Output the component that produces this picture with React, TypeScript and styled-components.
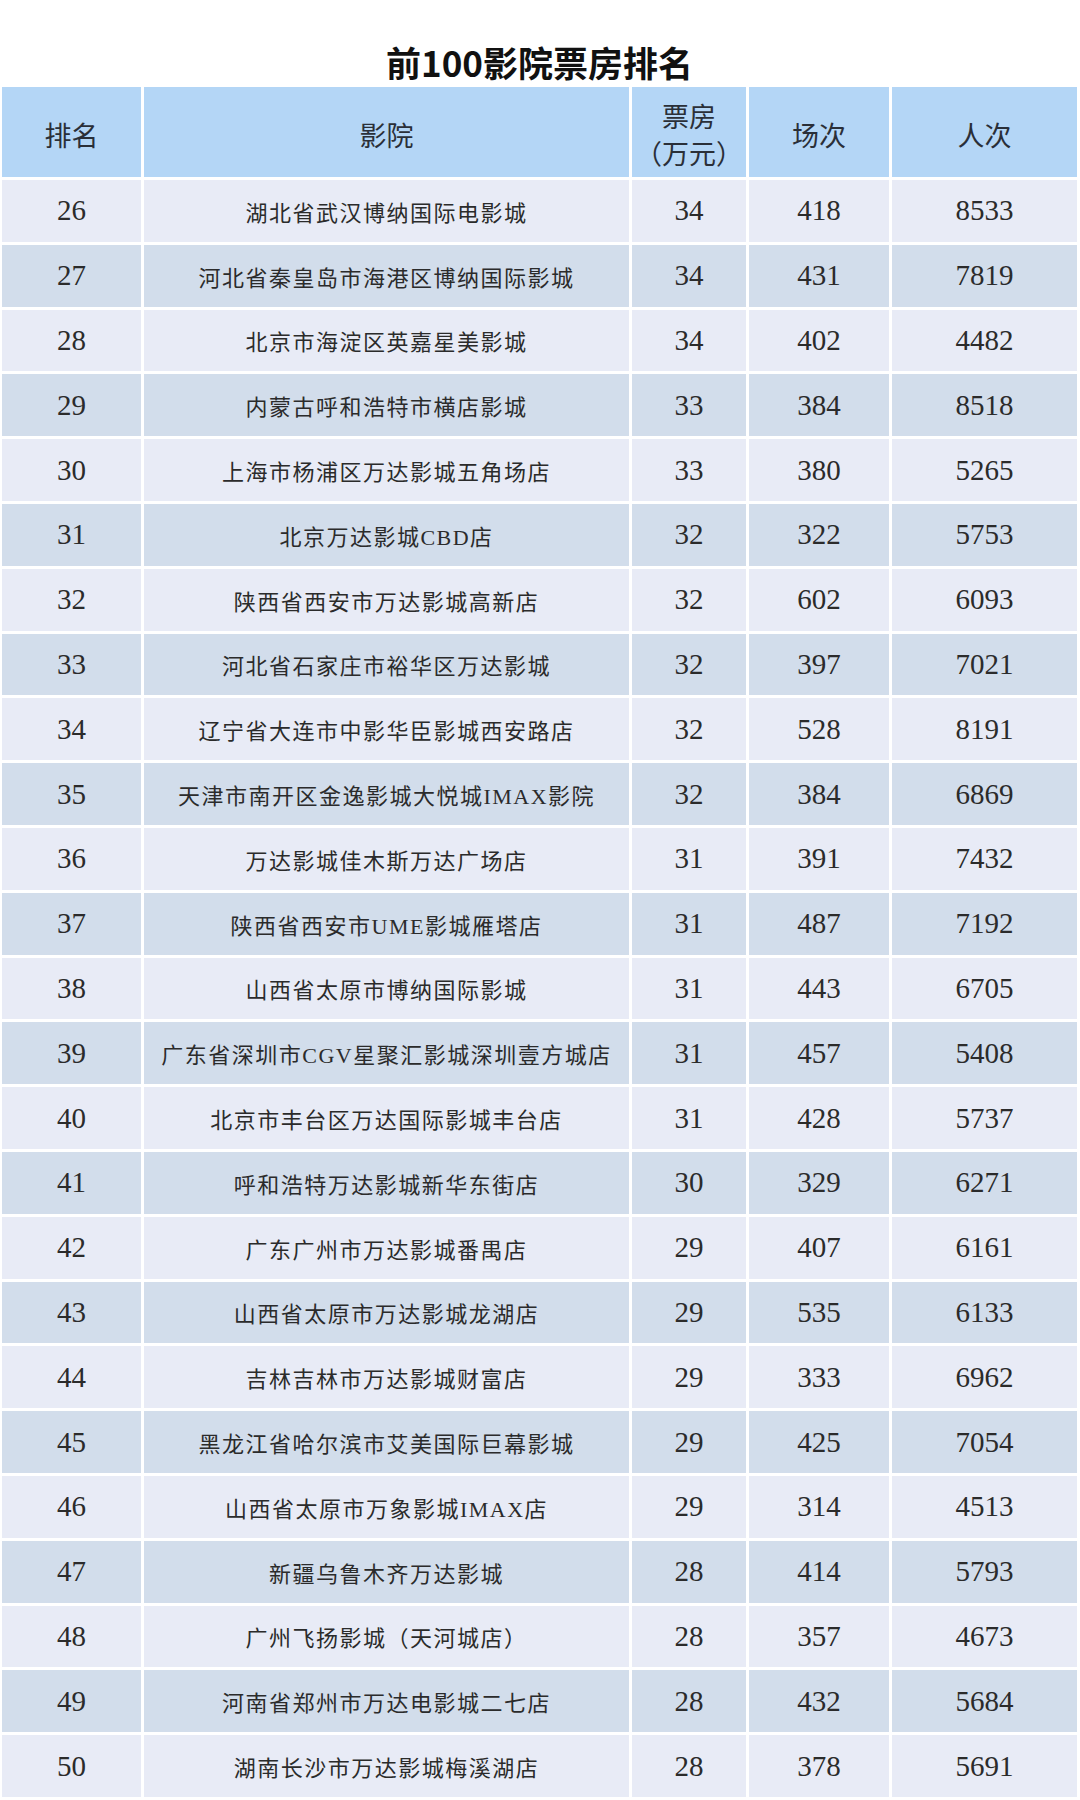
import React from 'react';
import styled, { createGlobalStyle } from 'styled-components';

const GlobalStyle = createGlobalStyle`
  html, body {
    margin: 0;
    padding: 0;
    background: #ffffff;
  }
`;

const Page = styled.div`
  width: 1080px;
  padding: 0 3px 0 2px;
  box-sizing: border-box;
  background: #ffffff;
`;

const Title = styled.h1`
  margin: 0;
  height: 84px;
  padding-top: 41px;
  box-sizing: border-box;
  text-align: center;
  font-family: "Noto Sans CJK SC", "Noto Sans", sans-serif;
  font-weight: 700;
  font-size: 35px;
  line-height: 42px;
  color: #111111;
`;

const Grid = styled.div`
  display: grid;
  grid-template-columns: 139px 485px 114px 140px 185px;
  column-gap: 3px;
  row-gap: 3px;
  padding-top: 3px;
`;

const HeadCell = styled.div`
  height: 90px;
  background: #b4d6f6;
  display: flex;
  flex-direction: column;
  align-items: center;
  justify-content: center;
  font-family: "Noto Sans CJK SC", sans-serif;
  font-weight: 400;
  font-size: 27px;
  line-height: 37px;
  color: #2a2f38;
  padding-top: 4px;
  box-sizing: border-box;
`;

const HeadLine = styled.span`
  display: block;
  height: 37px;
`;

const Cell = styled.div<{ $dark: boolean; $name?: boolean }>`
  height: 61.8px;
  background: ${(p) => (p.$dark ? '#d2ddeb' : '#e8ebf6')};
  display: flex;
  align-items: center;
  justify-content: center;
  font-family: "Liberation Serif", "Noto Sans CJK SC", serif;
  font-size: ${(p) => (p.$name ? '22px' : '29px')};
  letter-spacing: ${(p) => (p.$name ? '1.5px' : '0')};
  color: #2b2b2b;
  white-space: nowrap;
`;

const rows: [number, string, number, number, number][] = [
  [26, '湖北省武汉博纳国际电影城', 34, 418, 8533],
  [27, '河北省秦皇岛市海港区博纳国际影城', 34, 431, 7819],
  [28, '北京市海淀区英嘉星美影城', 34, 402, 4482],
  [29, '内蒙古呼和浩特市横店影城', 33, 384, 8518],
  [30, '上海市杨浦区万达影城五角场店', 33, 380, 5265],
  [31, '北京万达影城CBD店', 32, 322, 5753],
  [32, '陕西省西安市万达影城高新店', 32, 602, 6093],
  [33, '河北省石家庄市裕华区万达影城', 32, 397, 7021],
  [34, '辽宁省大连市中影华臣影城西安路店', 32, 528, 8191],
  [35, '天津市南开区金逸影城大悦城IMAX影院', 32, 384, 6869],
  [36, '万达影城佳木斯万达广场店', 31, 391, 7432],
  [37, '陕西省西安市UME影城雁塔店', 31, 487, 7192],
  [38, '山西省太原市博纳国际影城', 31, 443, 6705],
  [39, '广东省深圳市CGV星聚汇影城深圳壹方城店', 31, 457, 5408],
  [40, '北京市丰台区万达国际影城丰台店', 31, 428, 5737],
  [41, '呼和浩特万达影城新华东街店', 30, 329, 6271],
  [42, '广东广州市万达影城番禺店', 29, 407, 6161],
  [43, '山西省太原市万达影城龙湖店', 29, 535, 6133],
  [44, '吉林吉林市万达影城财富店', 29, 333, 6962],
  [45, '黑龙江省哈尔滨市艾美国际巨幕影城', 29, 425, 7054],
  [46, '山西省太原市万象影城IMAX店', 29, 314, 4513],
  [47, '新疆乌鲁木齐万达影城', 28, 414, 5793],
  [48, '广州飞扬影城（天河城店）', 28, 357, 4673],
  [49, '河南省郑州市万达电影城二七店', 28, 432, 5684],
  [50, '湖南长沙市万达影城梅溪湖店', 28, 378, 5691],
];

const App: React.FC = () => {
  return (
    <Page>
      <GlobalStyle />
      <Title>前100影院票房排名</Title>
      <Grid>
        <HeadCell>排名</HeadCell>
        <HeadCell>影院</HeadCell>
        <HeadCell>
          <HeadLine>票房</HeadLine>
          <HeadLine>（万元）</HeadLine>
        </HeadCell>
        <HeadCell>场次</HeadCell>
        <HeadCell>人次</HeadCell>
        {rows.map(([rank, name, box, shows, people], i) => {
          const dark = i % 2 === 1;
          return (
            <React.Fragment key={rank}>
              <Cell $dark={dark}>{rank}</Cell>
              <Cell $dark={dark} $name>{name}</Cell>
              <Cell $dark={dark}>{box}</Cell>
              <Cell $dark={dark}>{shows}</Cell>
              <Cell $dark={dark}>{people}</Cell>
            </React.Fragment>
          );
        })}
      </Grid>
    </Page>
  );
};

export default App;
